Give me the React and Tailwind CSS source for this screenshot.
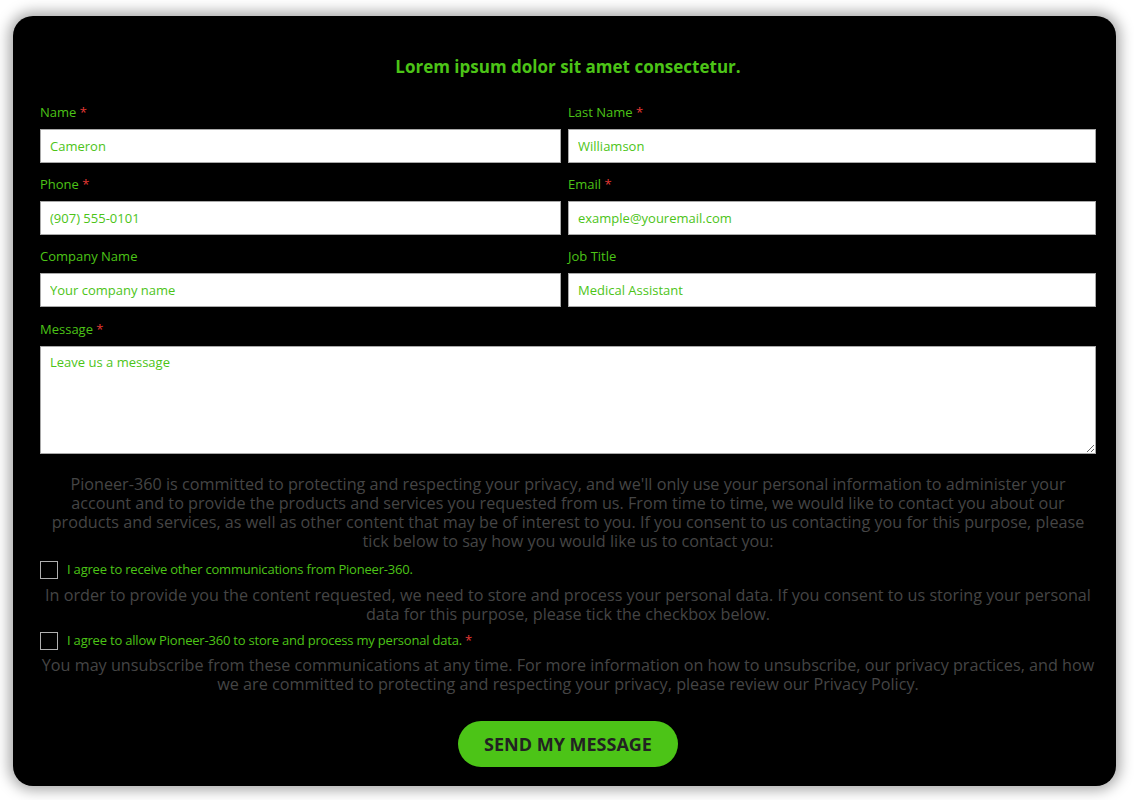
import React from "react";

const green = "text-[#4cc417]";

const Label = ({ children, required }) => (
  <label className={`block text-[13px] leading-[18px] ${green} mb-[8px]`}>
    {children}
    {required && <span className="text-[#e53935]"> *</span>}
  </label>
);

const Field = ({ label, required, placeholder }) => (
  <div>
    <Label required={required}>{label}</Label>
    <input
      placeholder={placeholder}
      className="block w-full h-[34px] bg-white border border-[#a9a9a9] px-[9px] text-[13px] text-[#4cc417] placeholder:text-[#4cc417] outline-none"
    />
  </div>
);

const Check = ({ children, required }) => (
  <label className="flex items-center gap-[9px] h-[18px]">
    <span className="w-[18px] h-[18px] border border-[#b0b0b0] bg-black shrink-0" />
    <span className={`text-[13px] tracking-[-0.2px] ${green}`}>
      {children}
      {required && <span className="text-[#e53935]"> *</span>}
    </span>
  </label>
);

export default function App() {
  return (
    <div className="min-h-[800px] bg-white pt-[16px] px-[13px] pb-[14px]" style={{ fontFamily: '"Open Sans", sans-serif' }}>
      <div className="bg-black rounded-[20px] shadow-[0_0_14px_4px_rgba(0,0,0,0.35)] pl-[27px] pr-[20px] pt-[39px] pb-[19px] w-[1103px]">
        <h2 className={`text-center text-[17px] font-bold leading-[24px] ${green} mb-[24px]`}>
          Lorem ipsum dolor sit amet consectetur.
        </h2>

        <div className="grid grid-cols-[521px_528px] gap-x-[7px] gap-y-[12px]">
          <Field label="Name" required placeholder="Cameron" />
          <Field label="Last Name" required placeholder="Williamson" />
          <Field label="Phone" required placeholder="(907) 555-0101" />
          <Field label="Email" required placeholder="example@youremail.com" />
          <Field label="Company Name" placeholder="Your company name" />
          <Field label="Job Title" placeholder="Medical Assistant" />
        </div>

        <div className="mt-[13px]">
          <Label required>Message</Label>
          <textarea
            placeholder="Leave us a message"
            className="block w-full h-[108px] bg-white border border-[#a9a9a9] px-[9px] py-[6px] text-[13px] text-[#4cc417] placeholder:text-[#4cc417] outline-none"
          />
        </div>

        <p className="mt-[21px] text-center text-[16.2px] leading-[19px] text-[#454545]">
          Pioneer-360 is committed to protecting and respecting your privacy, and we'll only use your personal information to administer your account and to provide the products and services you requested from us. From time to time, we would like to contact you about our products and services, as well as other content that may be of interest to you. If you consent to us contacting you for this purpose, please tick below to say how you would like us to contact you:
        </p>

        <div className="mt-[10px]">
          <Check>I agree to receive other communications from Pioneer-360.</Check>
        </div>

        <p className="mt-[7px] text-center text-[16.2px] leading-[19px] text-[#454545]">
          In order to provide you the content requested, we need to store and process your personal data. If you consent to us storing your personal data for this purpose, please tick the checkbox below.
        </p>

        <div className="mt-[8px]">
          <Check required>I agree to allow Pioneer-360 to store and process my personal data.</Check>
        </div>

        <p className="mt-[6px] text-center text-[16.2px] leading-[19px] text-[#454545]">
          You may unsubscribe from these communications at any time. For more information on how to unsubscribe, our privacy practices, and how we are committed to protecting and respecting your privacy, please review our Privacy Policy.
        </p>

        <div className="flex justify-center mt-[27px]">
          <button className="w-[220px] h-[46px] rounded-full bg-[#4cc417] text-[#222] text-[18px] font-bold uppercase">
            Send my message
          </button>
        </div>
      </div>
    </div>
  );
}
